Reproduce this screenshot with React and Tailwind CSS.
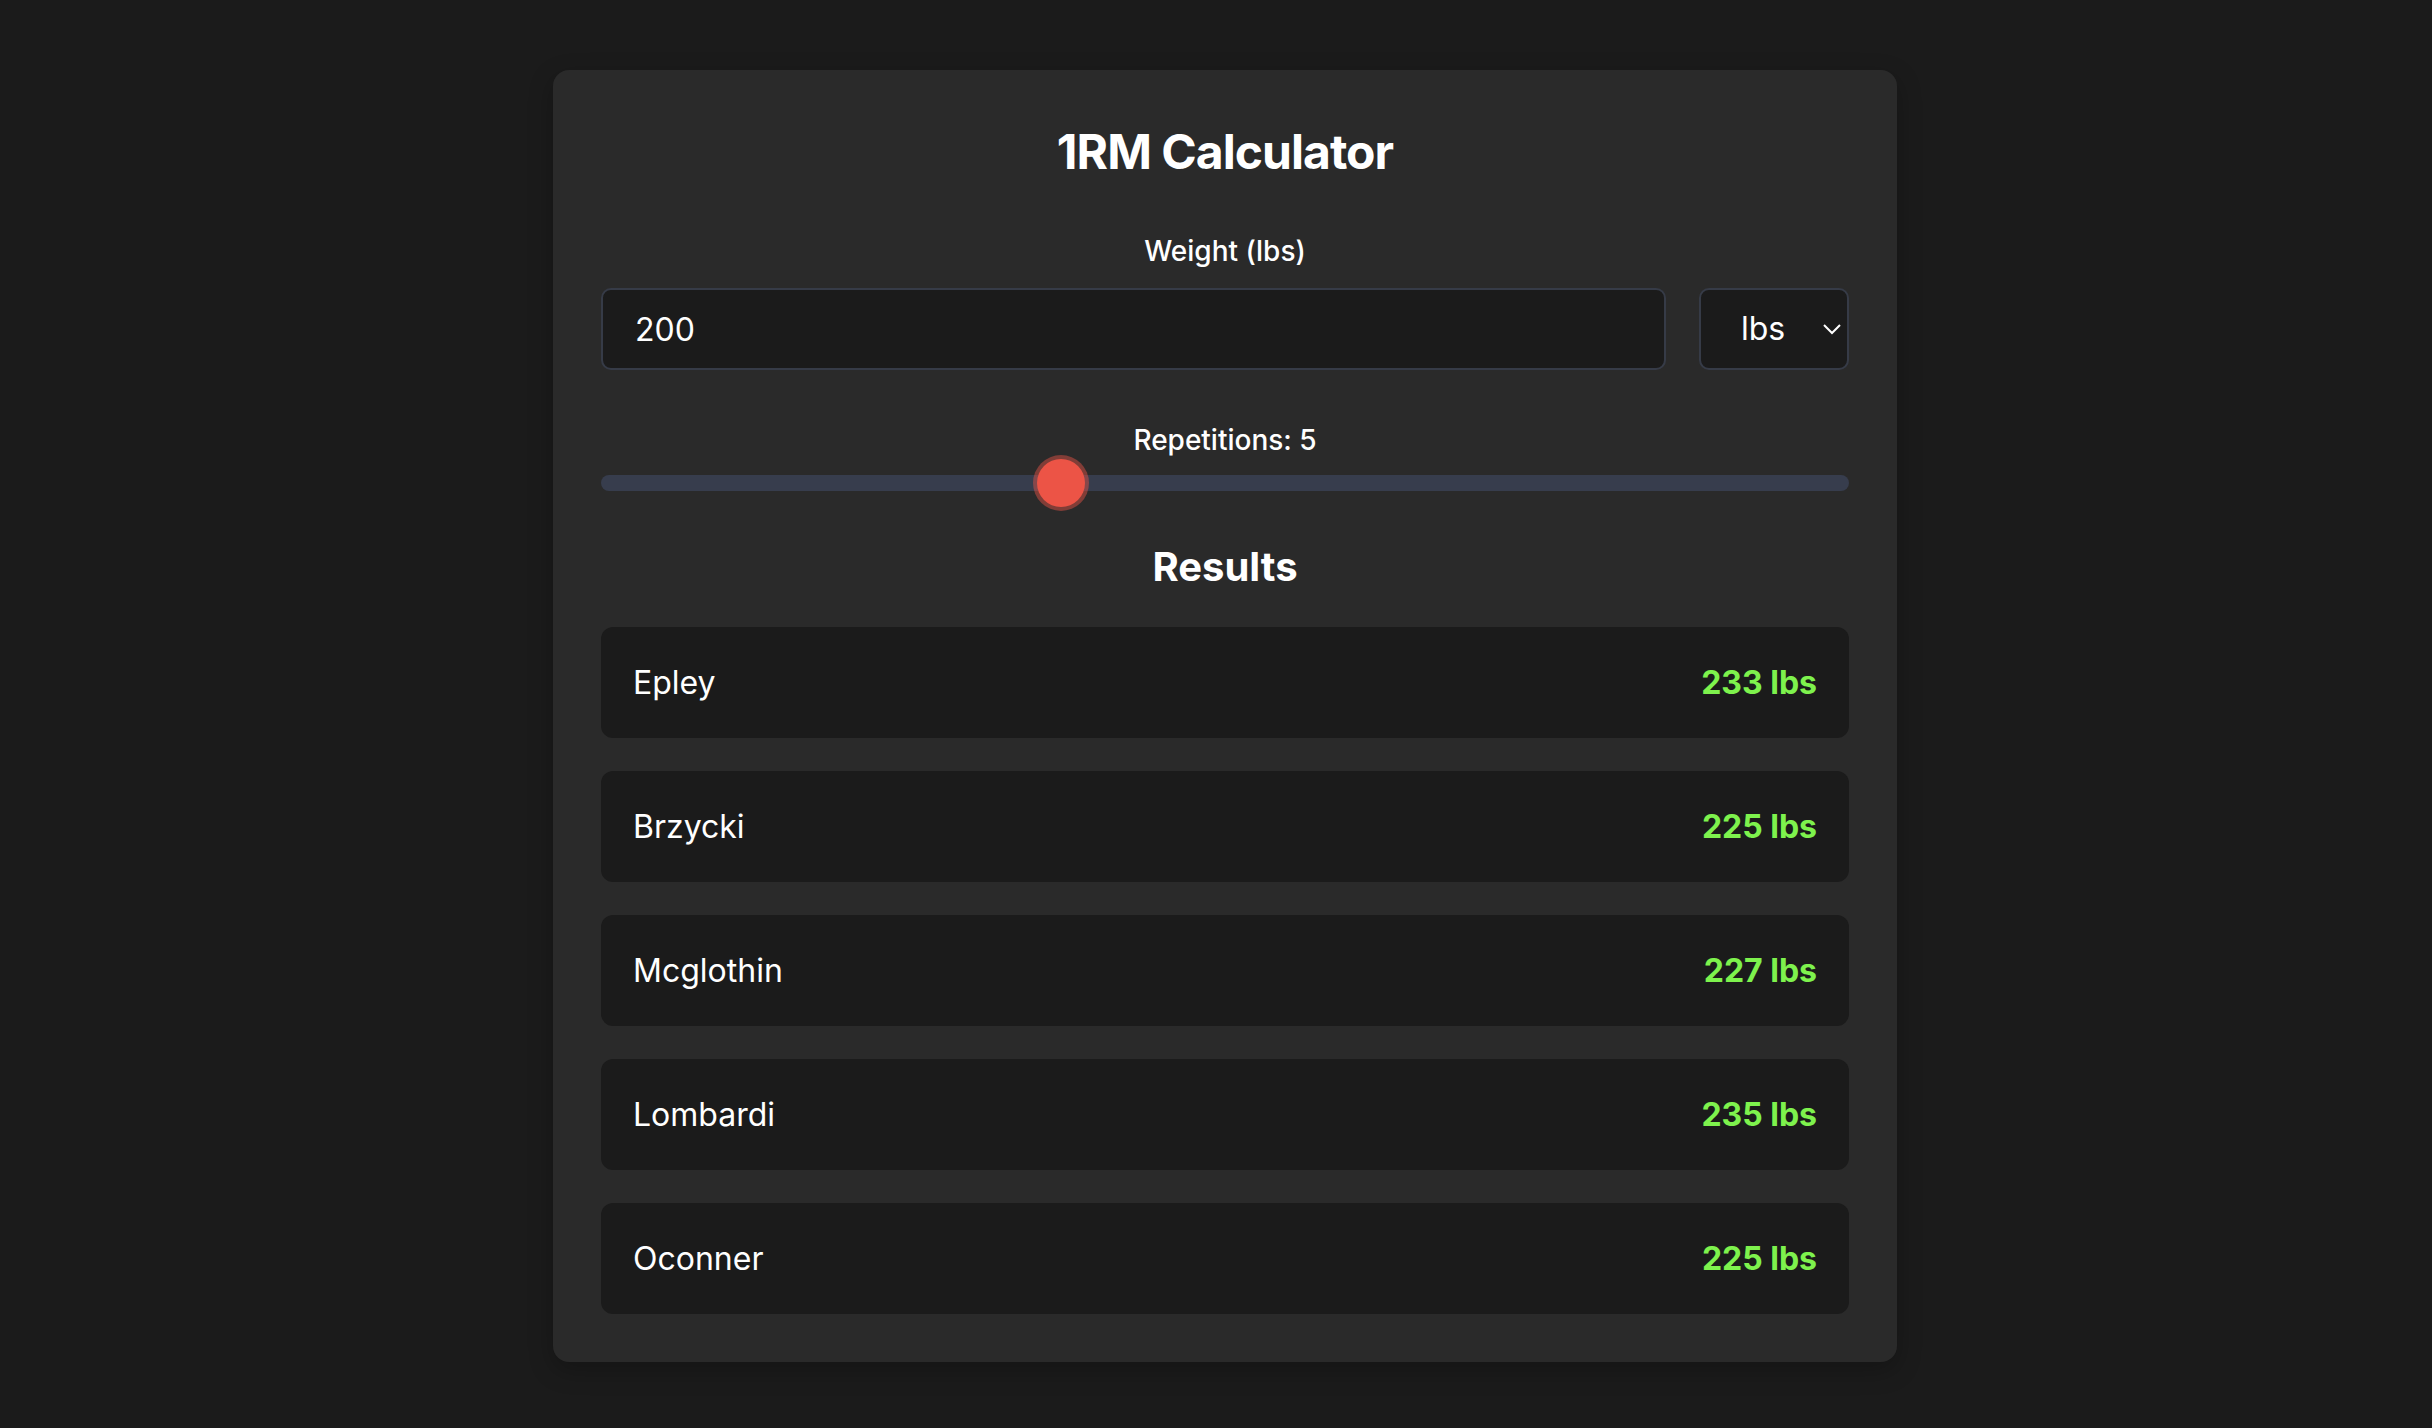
import { useState } from "react";

const formulas = [
  { name: "Epley", calc: (w, r) => w * (1 + r / 30) },
  { name: "Brzycki", calc: (w, r) => w * (36 / (37 - r)) },
  { name: "Mcglothin", calc: (w, r) => (100 * w) / (101.3 - 2.67123 * r) },
  { name: "Lombardi", calc: (w, r) => w * Math.pow(r, 0.1) },
  { name: "Oconner", calc: (w, r) => w * (1 + 0.025 * r) },
];

function App() {
  const [weight, setWeight] = useState("200");
  const [unit, setUnit] = useState("lbs");
  const [reps, setReps] = useState(5);

  const w = parseFloat(weight) || 0;

  return (
    <div className="min-h-screen bg-[#1b1b1b] pt-[70px] pb-16 pl-[18px] font-['Inter','Noto_Sans',sans-serif] text-white">
      <div className="mx-auto w-[1344px] rounded-[16px] bg-[#2a2a2a] p-[48px] pt-[50px] pb-[48px] shadow-[0_8px_24px_rgba(0,0,0,0.25)]">
        <h1 className="mb-[47px] text-center text-[48px] leading-[64px] font-bold tracking-[-0.02em]">
          1RM Calculator
        </h1>

        {/* Weight input */}
        <label className="mb-[17px] block text-center text-[28px] leading-[40px] font-medium">
          Weight ({unit})
        </label>
        <div className="flex gap-[33px]">
          <input
            type="text"
            value={weight}
            onChange={(e) => setWeight(e.target.value)}
            className="h-[82px] flex-1 rounded-[10px] border-2 border-[#363b47] bg-[#1b1b1b] px-[32px] text-[32px] text-white outline-none"
          />
          <div className="relative w-[150px]">
            <select
              value={unit}
              onChange={(e) => setUnit(e.target.value)}
              className="h-[82px] w-full appearance-none rounded-[10px] border-2 border-[#363b47] bg-[#1b1b1b] pl-[40px] text-[32px] text-white outline-none"
            >
              <option value="lbs">lbs</option>
              <option value="kg">kg</option>
            </select>
            <svg
              className="pointer-events-none absolute top-[36px] right-[8px]"
              width="18"
              height="11"
              viewBox="0 0 18 11"
              fill="none"
            >
              <path d="M1 1l8 8 8-8" stroke="white" strokeWidth="2" />
            </svg>
          </div>
        </div>

        {/* Reps slider */}
        <label className="mt-[50px] block text-center text-[28px] leading-[40px] font-medium">
          Repetitions: {reps}
        </label>
        <input
          type="range"
          min="1"
          max="12"
          value={reps}
          onChange={(e) => setReps(Number(e.target.value))}
          className="mt-[15px] block h-[16px] w-full cursor-pointer appearance-none rounded-full bg-[#373d4d] outline-none [&::-webkit-slider-thumb]:h-[48px] [&::-webkit-slider-thumb]:w-[48px] [&::-webkit-slider-thumb]:appearance-none [&::-webkit-slider-thumb]:rounded-full [&::-webkit-slider-thumb]:bg-[#ec5446] [&::-webkit-slider-thumb]:shadow-[0_0_0_4px_rgba(236,84,70,0.45)]"
        />

        {/* Results */}
        <h2 className="mt-[48px] mb-[32px] text-center text-[40px] leading-[56px] font-bold">
          Results
        </h2>
        <div className="flex flex-col gap-[33px]">
          {formulas.map((f) => (
            <div
              key={f.name}
              className="flex h-[111px] items-center justify-between rounded-[12px] bg-[#1b1b1b] px-[32px]"
            >
              <span className="text-[32px]">{f.name}</span>
              <span className="text-[32px] font-bold text-[#7ef24d]">
                {Math.round(f.calc(w, reps))} {unit}
              </span>
            </div>
          ))}
        </div>
      </div>
    </div>
  );
}

export default App;
